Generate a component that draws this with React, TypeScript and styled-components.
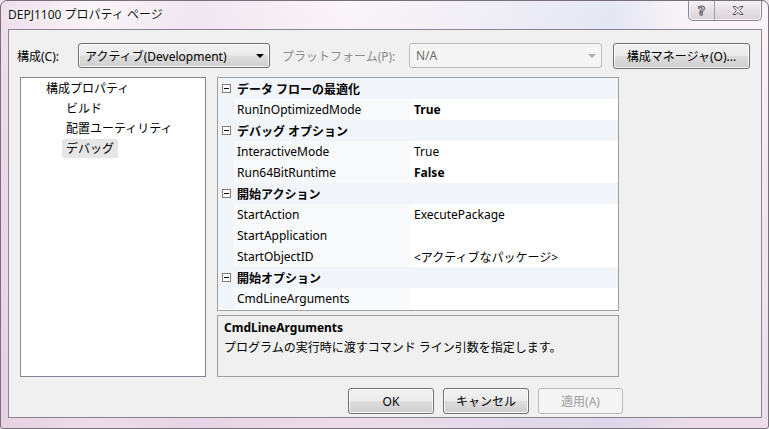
import React from "react";
import styled, { createGlobalStyle } from "styled-components";

const GlobalStyle = createGlobalStyle`
  html, body {
    margin: 0;
    padding: 0;
    background: #efe4ec;
  }
  body {
    font-family: "Noto Sans", "Noto Sans CJK JP", sans-serif;
    font-size: 12px;
    color: #000;
  }
`;

const Window = styled.div`
  box-sizing: border-box;
  width: 769px;
  height: 429px;
  display: flex;
  flex-direction: column;
  padding: 0 6px 10px 7px;
  border: 1px solid #77707a;
  border-radius: 7px 7px 3px 3px;
  background: linear-gradient(
      90deg,
      rgba(225, 195, 222, 0.45) 0%,
      rgba(255, 255, 255, 0) 12%,
      rgba(220, 200, 225, 0.35) 25%,
      rgba(255, 255, 255, 0) 45%,
      rgba(190, 205, 235, 0.35) 80%,
      rgba(255, 255, 255, 0) 90%
    ),
    linear-gradient(180deg, #fbf6f9 0%, #f3e8ef 40%, #ecdde8 100%);
  overflow: hidden;
`;

const TitleBar = styled.div`
  height: 28px;
  display: flex;
  align-items: flex-start;
  justify-content: space-between;
`;

const Title = styled.div`
  padding-top: 6px;
  line-height: 16px;
  color: #111;
  text-shadow: 0 0 6px #fff, 0 0 4px #fff, 0 0 2px #fff;
`;

const CaptionGroup = styled.div`
  display: flex;
  margin-top: -1px;
  border: 1px solid #8c8590;
  border-top: none;
  border-radius: 0 0 5px 5px;
  overflow: hidden;
  background: linear-gradient(180deg, #f7f3f6 0%, #e5dfe4 55%, #d9d3d9 100%);
  box-shadow: inset 0 0 0 1px rgba(255, 255, 255, 0.7);
`;

const CaptionButton = styled.div<{ $wide?: boolean }>`
  width: ${({ $wide }) => ($wide ? "46px" : "25px")};
  height: 20px;
  display: flex;
  align-items: center;
  justify-content: center;
  & + & {
    border-left: 1px solid #a79fa8;
  }
`;

const HelpGlyph = styled.span`
  font-family: "DejaVu Sans", sans-serif;
  font-weight: bold;
  font-size: 13px;
  color: #e9e6ea;
  -webkit-text-stroke: 1px #5e5a62;
`;

const Client = styled.div`
  flex: 1;
  display: flex;
  flex-direction: column;
  background: #f0f0f0;
  border: 1px solid #8b8593;
`;

const TopRow = styled.div`
  display: flex;
  align-items: center;
  height: 25px;
  margin-top: 13px;
  padding-left: 8px;
`;

const FieldLabel = styled.span<{ $width: number; $disabled?: boolean }>`
  width: ${({ $width }) => $width}px;
  flex-shrink: 0;
  color: ${({ $disabled }) => ($disabled ? "#8d8d8d" : "#000")};
`;

const PlatformLabel = styled(FieldLabel)`
  padding-left: 12px;
`;

const Combo = styled.div<{ $width: number; $disabled?: boolean }>`
  box-sizing: border-box;
  width: ${({ $width }) => $width}px;
  height: 25px;
  display: flex;
  align-items: center;
  justify-content: space-between;
  padding: 0 5px 0 6px;
  border: 1px solid ${({ $disabled }) => ($disabled ? "#b8bcbf" : "#707070")};
  border-radius: 3px;
  color: ${({ $disabled }) => ($disabled ? "#6d6d6d" : "#000")};
  background: ${({ $disabled }) =>
    $disabled
      ? "#f4f4f4"
      : "linear-gradient(180deg, #f2f2f2 0%, #ebebeb 49%, #dddddd 51%, #cfcfcf 100%)"};
  box-shadow: ${({ $disabled }) =>
    $disabled ? "none" : "inset 0 0 0 1px rgba(255,255,255,0.8)"};
`;

const Arrow = styled.span<{ $disabled?: boolean }>`
  width: 0;
  height: 0;
  border-left: 4px solid transparent;
  border-right: 4px solid transparent;
  border-top: 4px solid ${({ $disabled }) => ($disabled ? "#b0b0b0" : "#000")};
`;

const Button = styled.div<{ $width: number; $disabled?: boolean }>`
  box-sizing: border-box;
  width: ${({ $width }) => $width}px;
  height: 26px;
  display: flex;
  align-items: center;
  justify-content: center;
  border: 1px solid ${({ $disabled }) => ($disabled ? "#b8bcbf" : "#707070")};
  border-radius: 3px;
  color: ${({ $disabled }) => ($disabled ? "#9d9d9d" : "#000")};
  background: ${({ $disabled }) =>
    $disabled
      ? "#f4f4f4"
      : "linear-gradient(180deg, #f2f2f2 0%, #ebebeb 49%, #dddddd 51%, #cfcfcf 100%)"};
  box-shadow: ${({ $disabled }) =>
    $disabled ? "none" : "inset 0 0 0 1px rgba(255,255,255,0.8)"};
`;

const ManagerButton = styled(Button)`
  margin-left: 11px;
`;

const Main = styled.div`
  display: flex;
  gap: 11px;
  height: 300px;
  margin-top: 9px;
  padding-left: 11px;
`;

const Tree = styled.div`
  box-sizing: border-box;
  width: 186px;
  height: 100%;
  background: #fff;
  border: 1px solid #828790;
`;

const TreeItem = styled.div<{ $level: number }>`
  height: 20px;
  display: flex;
  align-items: center;
  padding-left: ${({ $level }) => ($level === 0 ? 21 : 41)}px;
`;

const TreeText = styled.span<{ $selected?: boolean }>`
  line-height: 19px;
  padding: 0 ${({ $selected }) => ($selected ? "4px" : "0")};
  margin-left: ${({ $selected }) => ($selected ? "0" : "4px")};
  background: ${({ $selected }) => ($selected ? "#e6e6e6" : "transparent")};
  border-radius: 2px;
`;

const RightColumn = styled.div`
  width: 402px;
  display: flex;
  flex-direction: column;
  gap: 4px;
`;

const Grid = styled.div`
  box-sizing: border-box;
  height: 234px;
  border: 1px solid #a0a0a0;
  background: #fff;
`;

const Row = styled.div<{ $category?: boolean }>`
  height: 21px;
  display: grid;
  grid-template-columns: 16px 176px 1fr;
  align-items: center;
  background: ${({ $category }) => ($category ? "#f1f4f9" : "#fff")};
  font-weight: ${({ $category }) => ($category ? "bold" : "normal")};
`;

const Gutter = styled.div`
  height: 100%;
  display: flex;
  align-items: center;
  justify-content: center;
  background: #f1f4f9;
`;

const ExpandBox = styled.span`
  box-sizing: border-box;
  width: 9px;
  height: 9px;
  border: 1px solid #7d7d7d;
  background: #fff;
  display: flex;
  align-items: center;
  justify-content: center;
  &::after {
    content: "";
    width: 5px;
    height: 1px;
    background: #000;
  }
`;

const NameCell = styled.div<{ $category?: boolean }>`
  height: 100%;
  display: flex;
  align-items: center;
  padding-left: 3px;
  background: ${({ $category }) => ($category ? "transparent" : "#f8f9fb")};
  grid-column: ${({ $category }) => ($category ? "2 / 4" : "auto")};
  white-space: nowrap;
`;

const ValueCell = styled.div<{ $bold?: boolean }>`
  height: 100%;
  display: flex;
  align-items: center;
  padding-left: 4px;
  font-weight: ${({ $bold }) => ($bold ? "bold" : "normal")};
`;

const Description = styled.div`
  box-sizing: border-box;
  flex: 1;
  border: 1px solid #a0a0a0;
  background: #f0f0f0;
  padding: 2px 6px;
`;

const DescTitle = styled.div`
  font-weight: bold;
  line-height: 19px;
`;

const DescText = styled.div`
  line-height: 22px;
`;

const ButtonRow = styled.div`
  display: flex;
  gap: 9px;
  margin-top: 11px;
  padding-left: 339px;
`;

type Prop = {
  name: string;
  value?: string;
  bold?: boolean;
};

type Category = {
  title: string;
  props: Prop[];
};

const categories: Category[] = [
  {
    title: "データ フローの最適化",
    props: [{ name: "RunInOptimizedMode", value: "True", bold: true }],
  },
  {
    title: "デバッグ オプション",
    props: [
      { name: "InteractiveMode", value: "True" },
      { name: "Run64BitRuntime", value: "False", bold: true },
    ],
  },
  {
    title: "開始アクション",
    props: [
      { name: "StartAction", value: "ExecutePackage" },
      { name: "StartApplication", value: "" },
      { name: "StartObjectID", value: "<アクティブなパッケージ>" },
    ],
  },
  {
    title: "開始オプション",
    props: [{ name: "CmdLineArguments", value: "" }],
  },
];

const CloseIcon = () => (
  <svg width="14" height="11" viewBox="0 0 14 11">
    <path
      d="M2 1.5 L5 1.5 L7 3.7 L9 1.5 L12 1.5 L8.6 5.5 L12 9.5 L9 9.5 L7 7.3 L5 9.5 L2 9.5 L5.4 5.5 Z"
      fill="#eeebef"
      stroke="#5e5a62"
      strokeWidth="1"
      strokeLinejoin="round"
    />
  </svg>
);

const App: React.FC = () => {
  return (
    <>
      <GlobalStyle />
      <Window>
        <TitleBar>
          <Title>DEPJ1100 プロパティ ページ</Title>
          <CaptionGroup>
            <CaptionButton>
              <HelpGlyph>?</HelpGlyph>
            </CaptionButton>
            <CaptionButton $wide>
              <CloseIcon />
            </CaptionButton>
          </CaptionGroup>
        </TitleBar>
        <Client>
          <TopRow>
            <FieldLabel $width={61}>構成(C):</FieldLabel>
            <Combo $width={192}>
              <span>アクティブ(Development)</span>
              <Arrow />
            </Combo>
            <PlatformLabel $width={127} $disabled>
              プラットフォーム(P):
            </PlatformLabel>
            <Combo $width={193} $disabled>
              <span>N/A</span>
              <Arrow $disabled />
            </Combo>
            <ManagerButton $width={137}>構成マネージャ(O)...</ManagerButton>
          </TopRow>

          <Main>
            <Tree>
              <TreeItem $level={0}>
                <TreeText>構成プロパティ</TreeText>
              </TreeItem>
              <TreeItem $level={1}>
                <TreeText>ビルド</TreeText>
              </TreeItem>
              <TreeItem $level={1}>
                <TreeText>配置ユーティリティ</TreeText>
              </TreeItem>
              <TreeItem $level={1}>
                <TreeText $selected>デバッグ</TreeText>
              </TreeItem>
            </Tree>

            <RightColumn>
              <Grid>
                {categories.map((cat) => (
                  <React.Fragment key={cat.title}>
                    <Row $category>
                      <Gutter>
                        <ExpandBox />
                      </Gutter>
                      <NameCell $category>{cat.title}</NameCell>
                    </Row>
                    {cat.props.map((p) => (
                      <Row key={p.name}>
                        <Gutter />
                        <NameCell>{p.name}</NameCell>
                        <ValueCell $bold={p.bold}>{p.value}</ValueCell>
                      </Row>
                    ))}
                  </React.Fragment>
                ))}
              </Grid>
              <Description>
                <DescTitle>CmdLineArguments</DescTitle>
                <DescText>プログラムの実行時に渡すコマンド ライン引数を指定します。</DescText>
              </Description>
            </RightColumn>
          </Main>

          <ButtonRow>
            <Button $width={86}>OK</Button>
            <Button $width={86}>キャンセル</Button>
            <Button $width={85} $disabled>
              適用(A)
            </Button>
          </ButtonRow>
        </Client>
      </Window>
    </>
  );
};

export default App;
